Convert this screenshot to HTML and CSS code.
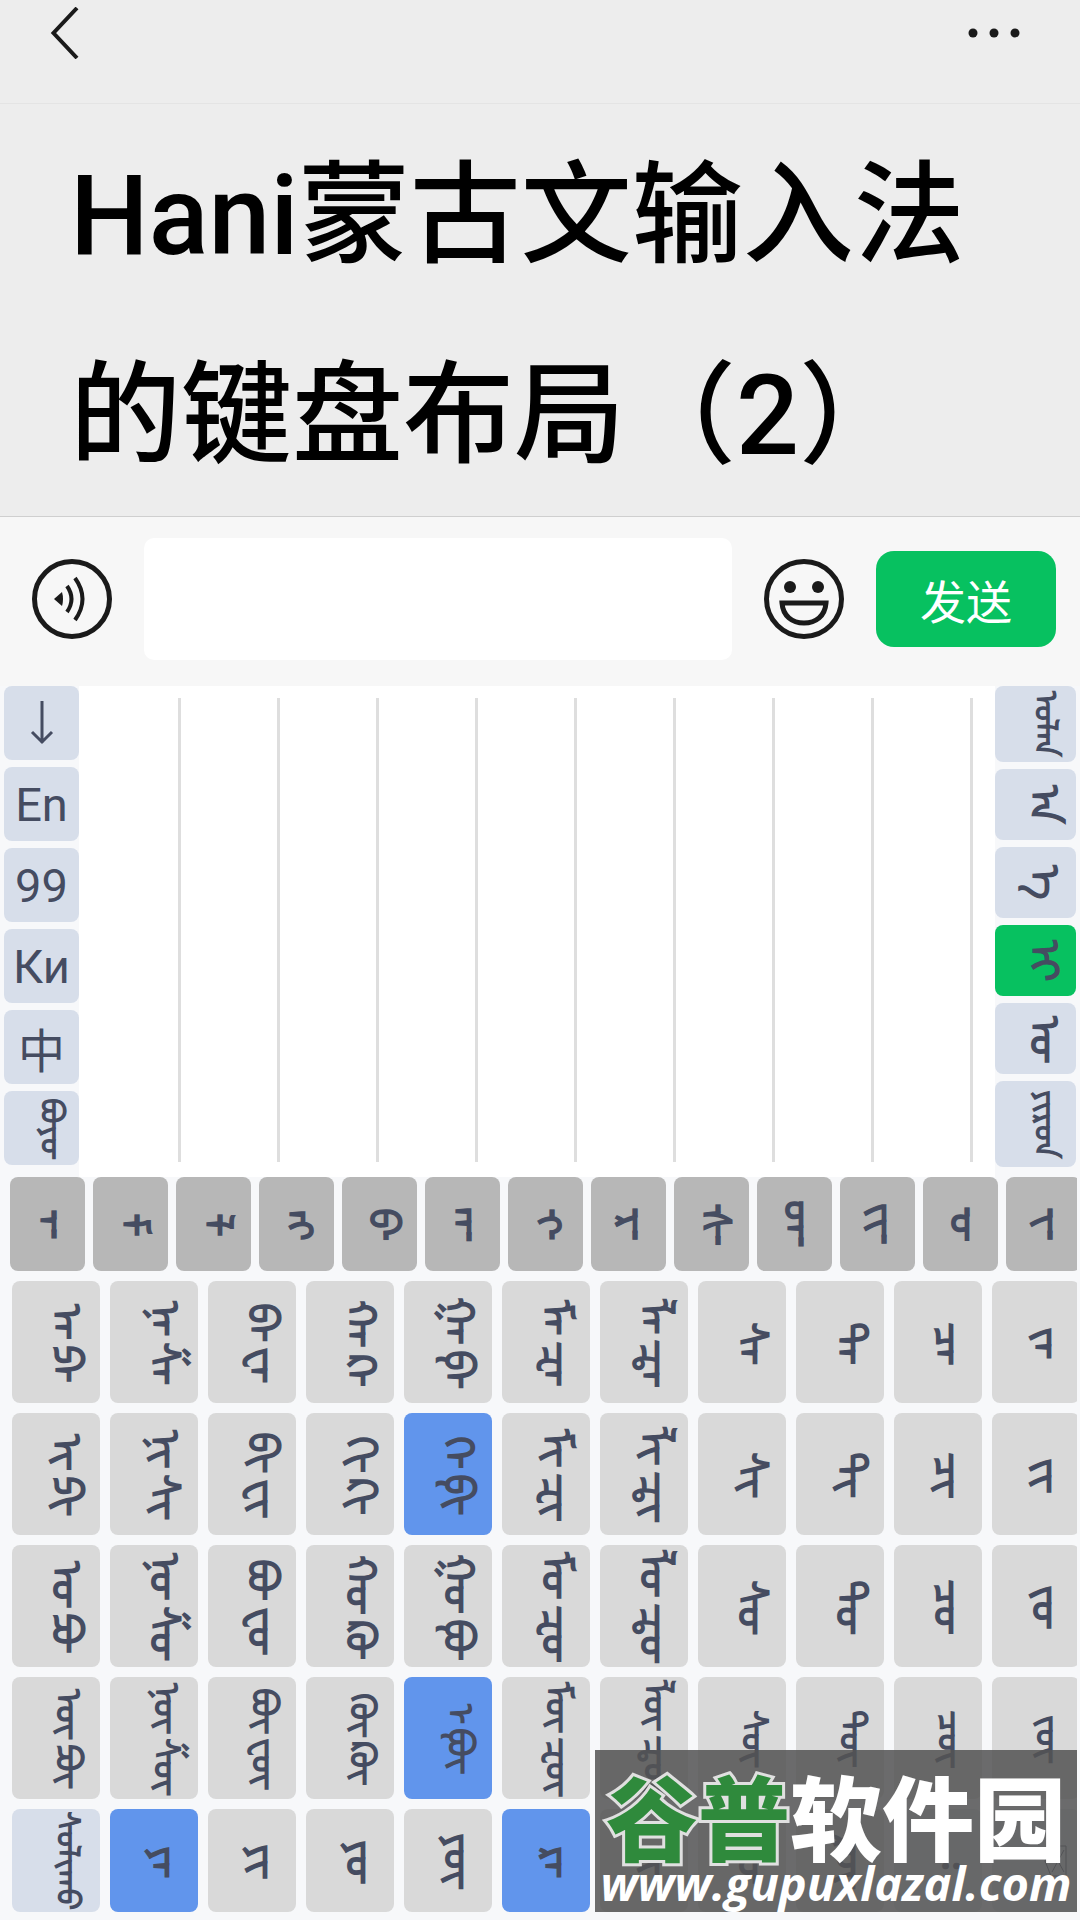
FILE: index.html
```
<!DOCTYPE html>
<html lang="zh-CN">
<head>
  <meta charset="UTF-8" />
  <meta name="viewport" content="width=device-width, initial-scale=1" />
  <title>Hani蒙古文输入法</title>
  <link rel="stylesheet" href="styles.css">
</head>
<body>
  <header class="topbar">
    <button class="iconBtn" aria-label="返回">
      <svg width="30" height="52" viewBox="0 0 30 52" fill="none" stroke="#1a1a1a" stroke-width="4"><path d="M27 1 3.500 26 27 51"/></svg>
    </button>
    <button class="iconBtn" aria-label="更多">
      <svg width="54" height="10" viewBox="0 0 54 10" fill="#1a1a1a"><circle cx="6" cy="5" r="4.500"/><circle cx="27" cy="5" r="4.500"/><circle cx="48" cy="5" r="4.500"/></svg>
    </button>
  </header>

  <main>
    <h1 class="title">Hani蒙古文输入法<br>的键盘布局（2）</h1>

    <form class="compose">
      <button type="button" class="iconBtn" aria-label="语音">
        <svg width="80" height="80" viewBox="0 0 80 80" fill="none" stroke="#1a1a1a" stroke-width="5">
          <circle cx="40" cy="40" r="37.500"/>
          <path d="M30 33 22 40 30 47Q32 40 30 33Z" fill="#1a1a1a" stroke="none"/>
          <path d="M35 27q9 13 0 26M43 19q15 21 0 42" stroke-width="4"/>
        </svg>
      </button>
      <input class="message" type="text" aria-label="消息">
      <button type="button" class="iconBtn" aria-label="表情">
        <svg width="80" height="80" viewBox="0 0 80 80" fill="none" stroke="#1a1a1a" stroke-width="5">
          <circle cx="40" cy="40" r="37.500"/>
          <circle cx="26" cy="28" r="6" fill="#1a1a1a" stroke="none"/>
          <circle cx="54" cy="28" r="6" fill="#1a1a1a" stroke="none"/>
          <path d="M18 44H62C61 57 52 64 40 64S19 57 18 44Z"/>
        </svg>
      </button>
      <button type="button" class="send">发送</button>
    </form>

    <section class="panel">
      <div class="side left">
        <button class="key pale" aria-label="收起">
          <svg width="24" height="44" viewBox="0 0 24 44" fill="none" stroke="#454c61" stroke-width="3"><path d="M12 0V42M2 31 12 41 22 31"/></svg>
        </button>
        <button class="key pale">En</button>
        <button class="key pale">99</button>
        <button class="key pale">Ки</button>
        <button class="key pale">中</button>
        <button class="key pale word"><span class="mn small">ᠪᠣᠶᠣ‍</span></button>
      </div>
      <div class="candidates">
        <span></span><span></span><span></span><span></span><span></span><span></span><span></span><span></span><span></span>
      </div>
      <div class="side right">
        <button class="key pale word"><span class="mn small">ᠣᠯᠠᠨ</span></button>
        <button class="key pale word"><span class="mn">ᠠ</span></button>
        <button class="key pale word"><span class="mn">ᠡ</span></button>
        <button class="key green word"><span class="mn">ᠢ</span></button>
        <button class="key pale word"><span class="mn">ᠣ‍</span></button>
        <button class="key pale word"><span class="mn small">ᠶᠢᠷᠣᠨ</span></button>
      </div>
    </section>

    <section class="keyboard" id="keyboard"></section>
  </main>

  <div class="watermark">
    <div class="brand"><b>谷普</b>软件园</div>
    <div class="site">www.gupuxlazal.com</div>
  </div>

<script>
  const keyboard = document.getElementById("keyboard")
  const backspace = '<svg width="24" height="32" viewBox="0 0 24 32" fill="none" stroke="#454c61"><path d="M7 1H22V31H7L1 16ZM8 5 20 27M20 5 8 27"/></svg>'

  // "/" splits the two halves of a key, "*" marks a blue key, "~" a pale one
  const rows = [
    ["top", "᠊ᠠ᠊ ᠊ᠮ‍ ᠊ᠯ‍ ‍ᠩ‍ ‍ᠪ᠊ ‍ᠠᠠ᠊ ᠊ᠭ᠊ ᠊ᠷ᠊ ᠊ᠰ᠊ ‍ᠣᠠ᠊ ‍ᠢᠢ᠊ ᠊ᠣ‍ ᠊ᠢ᠊"]
    , ["", "ᠠ‍/ᠫᠠ‍ ᠨᠠ‍/ᠱᠠ‍ ᠪᠠ‍/ᠸᠠ‍ ᠬᠠ‍/ᠺᠠ‍ ᠭᠠ‍/ᠹᠠ‍ ᠮᠠ‍/ᠽᠠ‍ ᠯᠠ‍/ᠼᠠ‍ ᠰᠠ‍ ᠲᠠ‍ ᠴᠠ‍ ᠵᠠ‍"]
    , ["", "ᠢ‍/ᠫᠢ‍ ᠨᠢ‍/ᠱᠢ‍ ᠪᠢ‍/ᠸᠢ‍ ᠬᠢ‍/ᠺᠢ‍ *ᠭᠡ‍/ᠹᠢ‍ ᠮᠢ‍/ᠽᠢ‍ ᠯᠢ‍/ᠼᠢ‍ ᠰᠢ‍ ᠲᠢ‍ ᠴᠢ‍ ᠵᠢ‍"]
    , ["", "ᠣ‍/ᠫᠣ‍ ᠨᠣ‍/ᠱᠣ‍ ᠪᠣ‍/ᠸᠣ‍ ᠬᠣ‍/ᠺᠣ‍ ᠭᠣ‍/ᠹᠣ‍ ᠮᠣ‍/ᠽᠣ‍ ᠯᠣ‍/ᠼᠣ‍ ᠰᠣ‍ ᠲᠣ‍ ᠴᠣ‍ ᠵᠣ‍"]
    , ["long", "ᠥ‍/ᠫᠥ‍ ᠨᠥ‍/ᠱᠥ‍ ᠪᠥ‍/ᠸᠥ‍ ᠬᠥ‍/ᠺᠥ‍ *ᠡ‍/ᠹᠥ‍ ᠮᠥ‍/ᠽᠥ‍ ᠯᠥ‍/ᠼᠥ‍ ᠰᠥ‍ ᠲᠥ‍ ᠴᠥ‍ ᠵᠥ‍"]
    , ["last", "~ᠰᠣᠯᠢᠬᠤ *ᠶᠠ‍ ᠶᠢ‍ ᠶᠣ‍ ᠶᠥ‍ *ᠷᠠ‍ ᠷᠢ‍ ᠷᠣ‍ ᠷᠥ‍ ~᠄ ~⌫"]
  ]

  rows.forEach(([kind, keys]) => {
    const row = document.createElement("div")
    row.className = ("row " + kind).trim()
    keys.split(" ").forEach(text => {
      const key = document.createElement("button")
      key.className = "key"
      if (text[0] === "*") key.classList.add("blue")
      if (text[0] === "~") key.classList.add("pale")
      text = text.replace(/^[*~]/, "")
      if (text === "⌫") {
        key.setAttribute("aria-label", "删除")
        key.innerHTML = backspace
      } else {
        text.split("/").forEach(part => {
          const span = document.createElement("span")
          span.className = "mn"
          if (part.length > 5) span.classList.add("small")
          span.textContent = part
          key.appendChild(span)
        })
      }
      row.appendChild(key)
    })
    keyboard.appendChild(row)
  })
</script>
</body>
</html>
```
FILE: styles.css
```
* {
  box-sizing: border-box;
}

body {
  margin: 0;
  position: relative;
  background: #f7f8fa;
  font-family: Roboto, "Noto Sans CJK SC", sans-serif;
  color: #454c61;
  overflow-x: hidden;
}

button {
  font: inherit;
  color: inherit;
  border: none;
  padding: 0;
  cursor: pointer;
}

svg {
  display: block;
}

.iconBtn {
  background: none;
}

.topbar {
  display: flex;
  justify-content: space-between;
  align-items: flex-start;
  height: 104px;
  padding: 7px 59px 0 50px;
  background: #ededed;
  border-bottom: 1px solid #e4e4e4;
}

.topbar .iconBtn {
  display: flex;
  align-items: center;
  height: 52px;
}

.title {
  margin: 0;
  padding: 12px 0 0 70px;
  background: #ededed;
  border-bottom: 1px solid #cfcfcf;
  color: #000;
  font-family: Roboto, "Noto Sans CJK SC", sans-serif;
  font-size: 111px;
  font-weight: 500;
  line-height: 200px;
}

.compose {
  display: flex;
  align-items: center;
  gap: 32px;
  padding: 21px 24px 26px 32px;
  background: #f7f7f7;
}

.message {
  flex: 1;
  min-width: 0;
  height: 122px;
  border: none;
  border-radius: 10px;
  background: #fff;
  padding: 0 20px;
  font: inherit;
  font-size: 46px;
}

.send {
  width: 180px;
  height: 96px;
  border-radius: 18px;
  background: #07c160;
  color: #fff;
  font-size: 46px;
}

.key {
  display: flex;
  flex-direction: column;
  align-items: center;
  justify-content: center;
  gap: 8px;
  min-width: 0;
  border-radius: 8px;
  background: #d9d9d9;
}

.pale {
  background: #d7deea;
}

.green {
  background: #07c160;
}

.blue {
  background: #6195ec;
}

.mn {
  writing-mode: vertical-lr;
  font-family: "Noto Sans Mongolian", "Mongolian Baiti", sans-serif;
  font-size: 42px;
  font-weight: 700;
  line-height: 48px;
  white-space: nowrap;
}

.mn.small {
  font-size: 32px;
}

.panel {
  display: flex;
  background: #fff;
}

.side {
  display: flex;
  flex-direction: column;
  gap: 7px;
  background: #f7f8fa;
  font-size: 47px;
}

.side .word {
  padding-left: 36px;
}

.side .mn {
  line-height: 40px;
}

.left {
  width: 79px;
  padding: 0 0 12px 4px;
}

.left .key {
  height: 74px;
}

.right {
  width: 85px;
  padding-right: 4px;
}

.right .key {
  height: 71px;
}

.right .key:first-child {
  height: 76px;
}

.right .key:last-child {
  height: 86px;
}

.candidates {
  flex: 1;
  display: grid;
  grid-template-columns: repeat(9, 1fr);
  padding: 12px 22px 15px 3px;
}

.candidates span {
  border-right: 3px solid #dedede;
}

.keyboard {
  display: flex;
  flex-direction: column;
  gap: 10px;
  margin-right: 3px;
  padding-bottom: 8px;
  overflow: hidden;
}

.row {
  display: grid;
  grid-template-columns: repeat(11, 1fr);
  gap: 10px;
  margin: 0 -3px 0 12px;
}

.row .key {
  height: 122px;
  padding-left: 40px;
}

.row.top {
  grid-template-columns: repeat(13, 1fr);
  gap: 8px;
  margin: 0 -4px 0 10px;
}

.top .key {
  height: 94px;
  padding-left: 26px;
  background: #b7b7b7;
}

.long .key {
  gap: 6px;
}

.long .mn {
  font-size: 36px;
}

.last .key {
  height: 103px;
}

/* site stamp lies over the last two rows */
.watermark {
  position: absolute;
  right: 3px;
  bottom: 8px;
  width: 482px;
  height: 162px;
  padding-top: 18px;
  background: rgba(84, 84, 84, 0.86);
  color: #fff;
  text-align: center;
  white-space: nowrap;
}

.brand {
  font-family: "Noto Sans CJK SC", sans-serif;
  font-size: 92px;
  font-weight: 900;
  line-height: 92px;
}

.brand b {
  color: #2f8a3c;
  -webkit-text-stroke: 6px #e0e0e0;
  paint-order: stroke fill;
}

.site {
  font-family: "Open Sans", sans-serif;
  font-size: 47px;
  font-weight: 700;
  font-style: italic;
  line-height: 46px;
}
```
